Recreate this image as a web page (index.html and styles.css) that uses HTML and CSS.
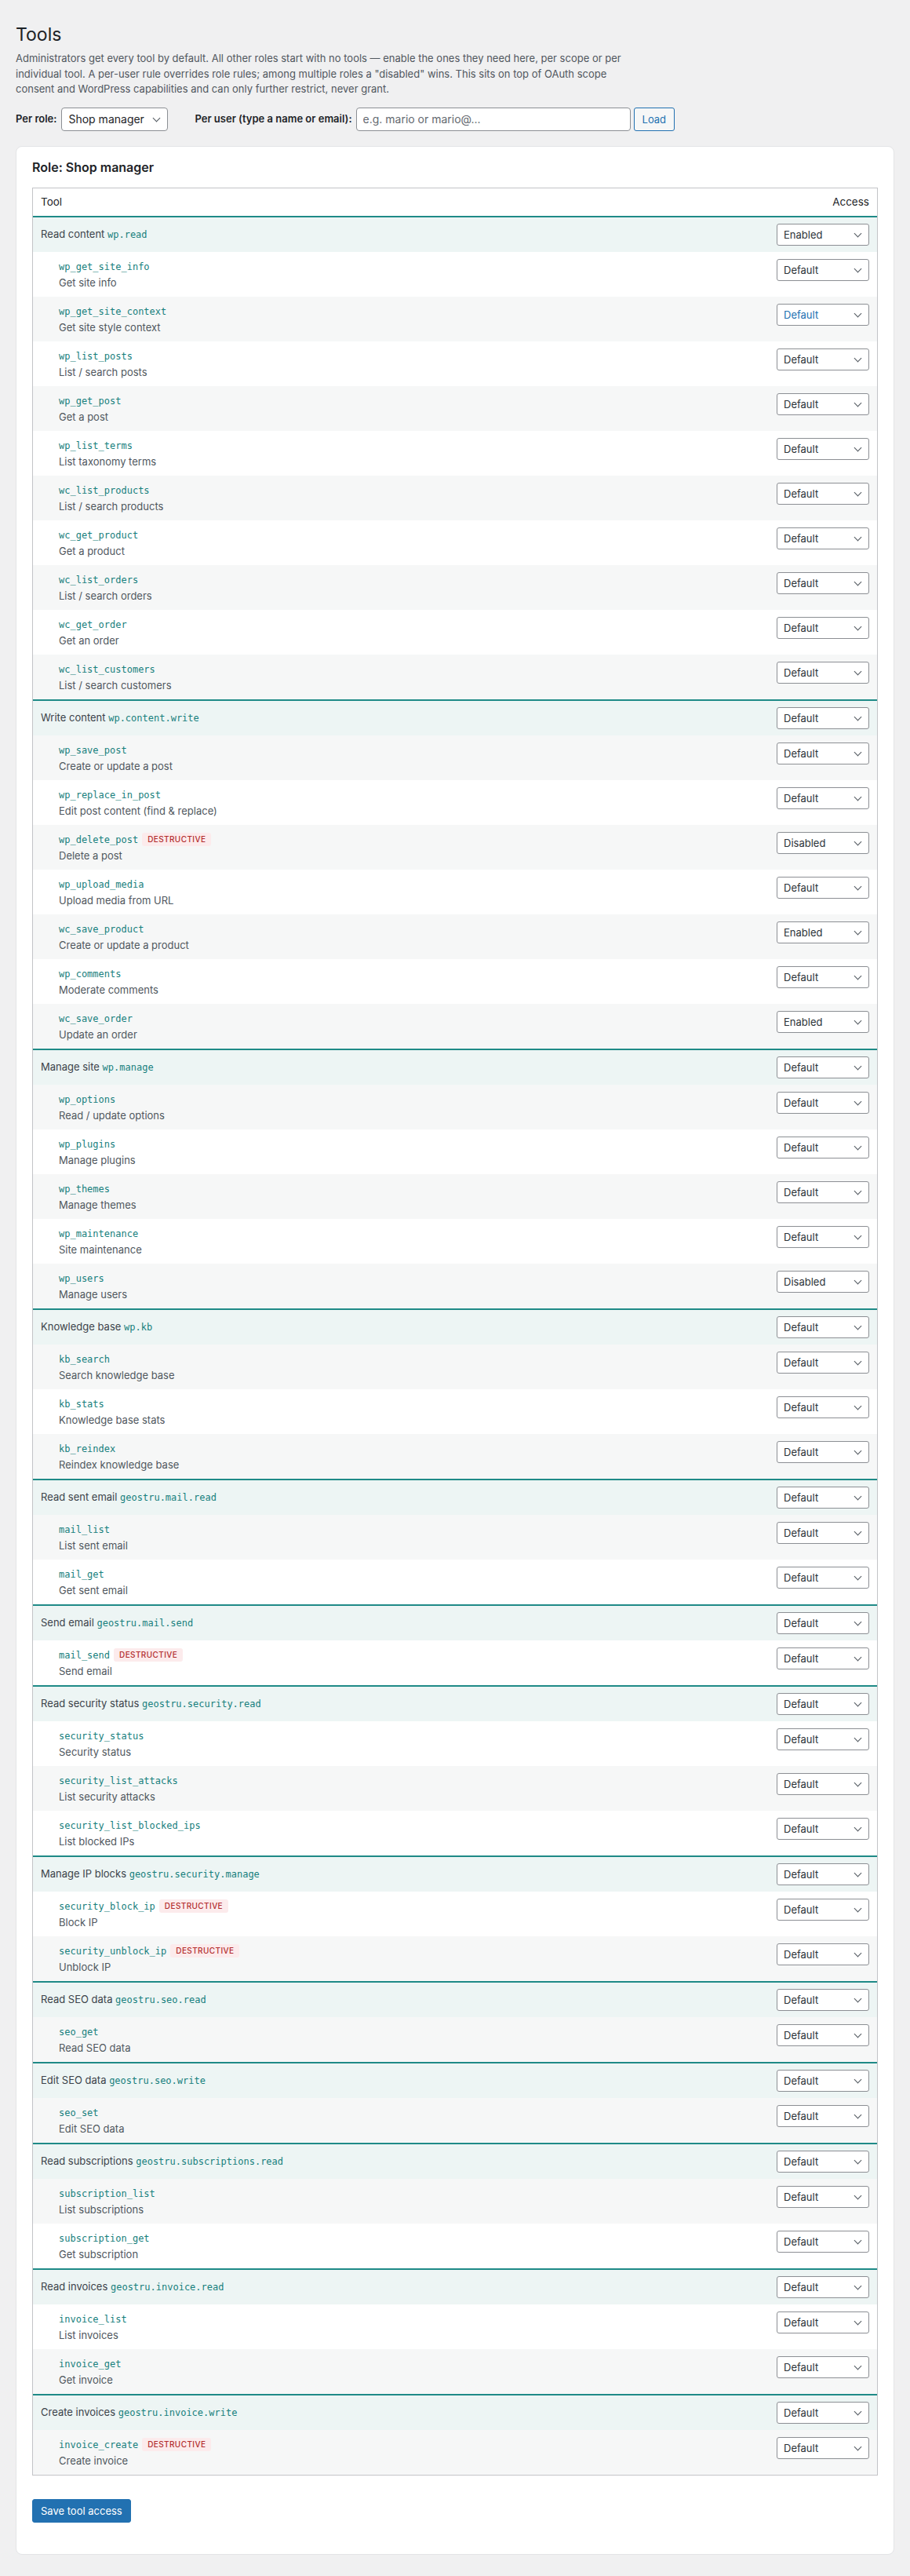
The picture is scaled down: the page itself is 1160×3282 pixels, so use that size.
FILE: index.html
```html
<!DOCTYPE html>
<html lang="en">
<head>
<meta charset="utf-8">
<title>Tools</title>
<link rel="stylesheet" href="styles.css">
</head>
<body>
<div class="wrap">
  <h1 class="page-title">Tools</h1>
  <p class="intro">Administrators get every tool by default. All other roles start with no tools — enable the ones they need here, per scope or per individual tool. A per-user rule overrides role rules; among multiple roles a "disabled" wins. This sits on top of OAuth scope consent and WordPress capabilities and can only further restrict, never grant.</p>

  <div class="controls">
    <label class="ctl-label" for="role">Per role:</label>
    <span class="sel sel-role"><select id="role"><option>Administrator</option><option selected>Shop manager</option><option>Editor</option></select></span>
    <label class="ctl-label ctl-user" for="user">Per user (type a name or email):</label>
    <input id="user" class="user-input" type="text" placeholder="e.g. mario or mario@...">
    <button class="btn-secondary" type="button">Load</button>
  </div>

  <div class="card">
    <h2 class="card-title">Role: Shop manager</h2>
    <table class="tools">
      <thead>
        <tr><th class="col-tool">Tool</th><th class="col-access">Access</th></tr>
      </thead>
      <tbody>
        <tr class="group"><td class="g-label">Read content <code>wp.read</code></td><td class="acc"><span class="sel"><select><option>Default</option><option selected>Enabled</option><option>Disabled</option></select></span></td></tr>
        <tr class="tool"><td class="t-name"><div class="tn"><code>wp_get_site_info</code></div><div class="td">Get site info</div></td><td class="acc"><span class="sel"><select><option selected>Default</option><option>Enabled</option><option>Disabled</option></select></span></td></tr>
        <tr class="tool"><td class="t-name"><div class="tn"><code>wp_get_site_context</code></div><div class="td">Get site style context</div></td><td class="acc"><span class="sel sel-focus"><select><option selected>Default</option><option>Enabled</option><option>Disabled</option></select></span></td></tr>
        <tr class="tool"><td class="t-name"><div class="tn"><code>wp_list_posts</code></div><div class="td">List / search posts</div></td><td class="acc"><span class="sel"><select><option selected>Default</option><option>Enabled</option><option>Disabled</option></select></span></td></tr>
        <tr class="tool"><td class="t-name"><div class="tn"><code>wp_get_post</code></div><div class="td">Get a post</div></td><td class="acc"><span class="sel"><select><option selected>Default</option><option>Enabled</option><option>Disabled</option></select></span></td></tr>
        <tr class="tool"><td class="t-name"><div class="tn"><code>wp_list_terms</code></div><div class="td">List taxonomy terms</div></td><td class="acc"><span class="sel"><select><option selected>Default</option><option>Enabled</option><option>Disabled</option></select></span></td></tr>
        <tr class="tool"><td class="t-name"><div class="tn"><code>wc_list_products</code></div><div class="td">List / search products</div></td><td class="acc"><span class="sel"><select><option selected>Default</option><option>Enabled</option><option>Disabled</option></select></span></td></tr>
        <tr class="tool"><td class="t-name"><div class="tn"><code>wc_get_product</code></div><div class="td">Get a product</div></td><td class="acc"><span class="sel"><select><option selected>Default</option><option>Enabled</option><option>Disabled</option></select></span></td></tr>
        <tr class="tool"><td class="t-name"><div class="tn"><code>wc_list_orders</code></div><div class="td">List / search orders</div></td><td class="acc"><span class="sel"><select><option selected>Default</option><option>Enabled</option><option>Disabled</option></select></span></td></tr>
        <tr class="tool"><td class="t-name"><div class="tn"><code>wc_get_order</code></div><div class="td">Get an order</div></td><td class="acc"><span class="sel"><select><option selected>Default</option><option>Enabled</option><option>Disabled</option></select></span></td></tr>
        <tr class="tool"><td class="t-name"><div class="tn"><code>wc_list_customers</code></div><div class="td">List / search customers</div></td><td class="acc"><span class="sel"><select><option selected>Default</option><option>Enabled</option><option>Disabled</option></select></span></td></tr>

        <tr class="group"><td class="g-label">Write content <code>wp.content.write</code></td><td class="acc"><span class="sel"><select><option selected>Default</option><option>Enabled</option><option>Disabled</option></select></span></td></tr>
        <tr class="tool"><td class="t-name"><div class="tn"><code>wp_save_post</code></div><div class="td">Create or update a post</div></td><td class="acc"><span class="sel"><select><option selected>Default</option><option>Enabled</option><option>Disabled</option></select></span></td></tr>
        <tr class="tool"><td class="t-name"><div class="tn"><code>wp_replace_in_post</code></div><div class="td">Edit post content (find &amp; replace)</div></td><td class="acc"><span class="sel"><select><option selected>Default</option><option>Enabled</option><option>Disabled</option></select></span></td></tr>
        <tr class="tool"><td class="t-name"><div class="tn"><code>wp_delete_post</code><span class="badge">Destructive</span></div><div class="td">Delete a post</div></td><td class="acc"><span class="sel"><select><option>Default</option><option>Enabled</option><option selected>Disabled</option></select></span></td></tr>
        <tr class="tool"><td class="t-name"><div class="tn"><code>wp_upload_media</code></div><div class="td">Upload media from URL</div></td><td class="acc"><span class="sel"><select><option selected>Default</option><option>Enabled</option><option>Disabled</option></select></span></td></tr>
        <tr class="tool"><td class="t-name"><div class="tn"><code>wc_save_product</code></div><div class="td">Create or update a product</div></td><td class="acc"><span class="sel"><select><option>Default</option><option selected>Enabled</option><option>Disabled</option></select></span></td></tr>
        <tr class="tool"><td class="t-name"><div class="tn"><code>wp_comments</code></div><div class="td">Moderate comments</div></td><td class="acc"><span class="sel"><select><option selected>Default</option><option>Enabled</option><option>Disabled</option></select></span></td></tr>
        <tr class="tool"><td class="t-name"><div class="tn"><code>wc_save_order</code></div><div class="td">Update an order</div></td><td class="acc"><span class="sel"><select><option>Default</option><option selected>Enabled</option><option>Disabled</option></select></span></td></tr>

        <tr class="group"><td class="g-label">Manage site <code>wp.manage</code></td><td class="acc"><span class="sel"><select><option selected>Default</option><option>Enabled</option><option>Disabled</option></select></span></td></tr>
        <tr class="tool"><td class="t-name"><div class="tn"><code>wp_options</code></div><div class="td">Read / update options</div></td><td class="acc"><span class="sel"><select><option selected>Default</option><option>Enabled</option><option>Disabled</option></select></span></td></tr>
        <tr class="tool"><td class="t-name"><div class="tn"><code>wp_plugins</code></div><div class="td">Manage plugins</div></td><td class="acc"><span class="sel"><select><option selected>Default</option><option>Enabled</option><option>Disabled</option></select></span></td></tr>
        <tr class="tool"><td class="t-name"><div class="tn"><code>wp_themes</code></div><div class="td">Manage themes</div></td><td class="acc"><span class="sel"><select><option selected>Default</option><option>Enabled</option><option>Disabled</option></select></span></td></tr>
        <tr class="tool"><td class="t-name"><div class="tn"><code>wp_maintenance</code></div><div class="td">Site maintenance</div></td><td class="acc"><span class="sel"><select><option selected>Default</option><option>Enabled</option><option>Disabled</option></select></span></td></tr>
        <tr class="tool"><td class="t-name"><div class="tn"><code>wp_users</code></div><div class="td">Manage users</div></td><td class="acc"><span class="sel"><select><option>Default</option><option>Enabled</option><option selected>Disabled</option></select></span></td></tr>

        <tr class="group"><td class="g-label">Knowledge base <code>wp.kb</code></td><td class="acc"><span class="sel"><select><option selected>Default</option><option>Enabled</option><option>Disabled</option></select></span></td></tr>
        <tr class="tool"><td class="t-name"><div class="tn"><code>kb_search</code></div><div class="td">Search knowledge base</div></td><td class="acc"><span class="sel"><select><option selected>Default</option><option>Enabled</option><option>Disabled</option></select></span></td></tr>
        <tr class="tool"><td class="t-name"><div class="tn"><code>kb_stats</code></div><div class="td">Knowledge base stats</div></td><td class="acc"><span class="sel"><select><option selected>Default</option><option>Enabled</option><option>Disabled</option></select></span></td></tr>
        <tr class="tool"><td class="t-name"><div class="tn"><code>kb_reindex</code></div><div class="td">Reindex knowledge base</div></td><td class="acc"><span class="sel"><select><option selected>Default</option><option>Enabled</option><option>Disabled</option></select></span></td></tr>

        <tr class="group"><td class="g-label">Read sent email <code>geostru.mail.read</code></td><td class="acc"><span class="sel"><select><option selected>Default</option><option>Enabled</option><option>Disabled</option></select></span></td></tr>
        <tr class="tool"><td class="t-name"><div class="tn"><code>mail_list</code></div><div class="td">List sent email</div></td><td class="acc"><span class="sel"><select><option selected>Default</option><option>Enabled</option><option>Disabled</option></select></span></td></tr>
        <tr class="tool"><td class="t-name"><div class="tn"><code>mail_get</code></div><div class="td">Get sent email</div></td><td class="acc"><span class="sel"><select><option selected>Default</option><option>Enabled</option><option>Disabled</option></select></span></td></tr>

        <tr class="group"><td class="g-label">Send email <code>geostru.mail.send</code></td><td class="acc"><span class="sel"><select><option selected>Default</option><option>Enabled</option><option>Disabled</option></select></span></td></tr>
        <tr class="tool"><td class="t-name"><div class="tn"><code>mail_send</code><span class="badge">Destructive</span></div><div class="td">Send email</div></td><td class="acc"><span class="sel"><select><option selected>Default</option><option>Enabled</option><option>Disabled</option></select></span></td></tr>

        <tr class="group"><td class="g-label">Read security status <code>geostru.security.read</code></td><td class="acc"><span class="sel"><select><option selected>Default</option><option>Enabled</option><option>Disabled</option></select></span></td></tr>
        <tr class="tool"><td class="t-name"><div class="tn"><code>security_status</code></div><div class="td">Security status</div></td><td class="acc"><span class="sel"><select><option selected>Default</option><option>Enabled</option><option>Disabled</option></select></span></td></tr>
        <tr class="tool"><td class="t-name"><div class="tn"><code>security_list_attacks</code></div><div class="td">List security attacks</div></td><td class="acc"><span class="sel"><select><option selected>Default</option><option>Enabled</option><option>Disabled</option></select></span></td></tr>
        <tr class="tool"><td class="t-name"><div class="tn"><code>security_list_blocked_ips</code></div><div class="td">List blocked IPs</div></td><td class="acc"><span class="sel"><select><option selected>Default</option><option>Enabled</option><option>Disabled</option></select></span></td></tr>

        <tr class="group"><td class="g-label">Manage IP blocks <code>geostru.security.manage</code></td><td class="acc"><span class="sel"><select><option selected>Default</option><option>Enabled</option><option>Disabled</option></select></span></td></tr>
        <tr class="tool"><td class="t-name"><div class="tn"><code>security_block_ip</code><span class="badge">Destructive</span></div><div class="td">Block IP</div></td><td class="acc"><span class="sel"><select><option selected>Default</option><option>Enabled</option><option>Disabled</option></select></span></td></tr>
        <tr class="tool"><td class="t-name"><div class="tn"><code>security_unblock_ip</code><span class="badge">Destructive</span></div><div class="td">Unblock IP</div></td><td class="acc"><span class="sel"><select><option selected>Default</option><option>Enabled</option><option>Disabled</option></select></span></td></tr>

        <tr class="group"><td class="g-label">Read SEO data <code>geostru.seo.read</code></td><td class="acc"><span class="sel"><select><option selected>Default</option><option>Enabled</option><option>Disabled</option></select></span></td></tr>
        <tr class="tool"><td class="t-name"><div class="tn"><code>seo_get</code></div><div class="td">Read SEO data</div></td><td class="acc"><span class="sel"><select><option selected>Default</option><option>Enabled</option><option>Disabled</option></select></span></td></tr>

        <tr class="group"><td class="g-label">Edit SEO data <code>geostru.seo.write</code></td><td class="acc"><span class="sel"><select><option selected>Default</option><option>Enabled</option><option>Disabled</option></select></span></td></tr>
        <tr class="tool"><td class="t-name"><div class="tn"><code>seo_set</code></div><div class="td">Edit SEO data</div></td><td class="acc"><span class="sel"><select><option selected>Default</option><option>Enabled</option><option>Disabled</option></select></span></td></tr>

        <tr class="group"><td class="g-label">Read subscriptions <code>geostru.subscriptions.read</code></td><td class="acc"><span class="sel"><select><option selected>Default</option><option>Enabled</option><option>Disabled</option></select></span></td></tr>
        <tr class="tool"><td class="t-name"><div class="tn"><code>subscription_list</code></div><div class="td">List subscriptions</div></td><td class="acc"><span class="sel"><select><option selected>Default</option><option>Enabled</option><option>Disabled</option></select></span></td></tr>
        <tr class="tool"><td class="t-name"><div class="tn"><code>subscription_get</code></div><div class="td">Get subscription</div></td><td class="acc"><span class="sel"><select><option selected>Default</option><option>Enabled</option><option>Disabled</option></select></span></td></tr>

        <tr class="group"><td class="g-label">Read invoices <code>geostru.invoice.read</code></td><td class="acc"><span class="sel"><select><option selected>Default</option><option>Enabled</option><option>Disabled</option></select></span></td></tr>
        <tr class="tool"><td class="t-name"><div class="tn"><code>invoice_list</code></div><div class="td">List invoices</div></td><td class="acc"><span class="sel"><select><option selected>Default</option><option>Enabled</option><option>Disabled</option></select></span></td></tr>
        <tr class="tool"><td class="t-name"><div class="tn"><code>invoice_get</code></div><div class="td">Get invoice</div></td><td class="acc"><span class="sel"><select><option selected>Default</option><option>Enabled</option><option>Disabled</option></select></span></td></tr>

        <tr class="group"><td class="g-label">Create invoices <code>geostru.invoice.write</code></td><td class="acc"><span class="sel"><select><option selected>Default</option><option>Enabled</option><option>Disabled</option></select></span></td></tr>
        <tr class="tool"><td class="t-name"><div class="tn"><code>invoice_create</code><span class="badge">Destructive</span></div><div class="td">Create invoice</div></td><td class="acc"><span class="sel"><select><option selected>Default</option><option>Enabled</option><option>Disabled</option></select></span></td></tr>
      </tbody>
    </table>
    <div class="actions">
      <button class="btn-primary" type="button">Save tool access</button>
    </div>
  </div>
</div>
</body>
</html>
```
FILE: styles.css
```css
html, body {
  margin: 0;
  padding: 0;
  background: #f0f0f1;
}
body {
  font-family: Inter, "Noto Sans", "Liberation Sans", sans-serif;
  font-size: 13px;
  line-height: 1.4;
  color: #3c434a;
}
.wrap {
  padding: 20px 20px 29px 20px;
}
.page-title {
  margin: 0;
  padding: 9px 0 4px;
  font-size: 23px;
  font-weight: 400;
  line-height: 30px;
  color: #1d2327;
}
.intro {
  margin: 2px 0 0;
  max-width: 790px;
  line-height: 19.5px;
  color: #50575e;
}
.controls {
  display: flex;
  align-items: center;
  margin-top: 13px;
  height: 30px;
}
.ctl-label {
  font-weight: 600;
  color: #1d2327;
  margin-right: 6px;
}
.ctl-user {
  margin-left: 34px;
  margin-right: 5px;
}
.sel {
  position: relative;
  display: block;
}
.sel::after {
  content: "";
  position: absolute;
  right: 11px;
  top: 50%;
  width: 6px;
  height: 6px;
  border-right: 1.6px solid #50575e;
  border-bottom: 1.6px solid #50575e;
  transform: translateY(-72%) rotate(45deg);
  pointer-events: none;
}
.sel select {
  -webkit-appearance: none;
  appearance: none;
  display: block;
  box-sizing: border-box;
  width: 118px;
  height: 28px;
  margin: 0;
  padding: 0 26px 0 8px;
  border: 1px solid #8c8f94;
  border-radius: 3px;
  background: #fff;
  font-family: Inter, "Noto Sans", "Liberation Sans", sans-serif;
  font-size: 13px;
  color: #2c3338;
  line-height: 26px;
}
.sel-role select {
  width: 136px;
  height: 30px;
  padding-left: 8px;
  border-radius: 4px;
  font-size: 14px;
  line-height: 28px;
  color: #1d2327;
}
.sel-focus select {
  color: #2271b1;
}
.user-input {
  box-sizing: border-box;
  width: 350px;
  height: 30px;
  margin: 0;
  padding: 0 8px;
  border: 1px solid #8c8f94;
  border-radius: 4px;
  background: #fff;
  font-family: Inter, "Noto Sans", "Liberation Sans", sans-serif;
  font-size: 14px;
  color: #2c3338;
}
.user-input::placeholder {
  color: #646970;
}
.btn-secondary {
  box-sizing: border-box;
  margin-left: 4px;
  height: 30px;
  padding: 0 10px;
  border: 1px solid #2271b1;
  border-radius: 3px;
  background: #f6f7f7;
  color: #2271b1;
  font-family: Inter, "Noto Sans", "Liberation Sans", sans-serif;
  font-size: 13px;
}
.card {
  margin-top: 19px;
  background: #fff;
  border: 1px solid #e3e4e6;
  border-radius: 8px;
  padding: 16px 20px 16px;
}
.card-title {
  margin: 0 0 16px;
  font-size: 16px;
  line-height: 20px;
  font-weight: 600;
  color: #1d2327;
}
.tools {
  width: 100%;
  border: 1px solid #c3c4c7;
  border-spacing: 0;
  background: #fff;
}
.tools th {
  padding: 8px 10px;
  line-height: 19px;
  font-weight: 400;
  font-size: 13.5px;
  color: #1d2327;
  text-align: left;
}
.tools th.col-access {
  text-align: right;
}
.tools td {
  padding: 0;
}
.tools tbody tr:nth-child(odd) {
  background: #f6f7f7;
}
.tools tbody tr.group {
  background: #edf5f4;
}
.tools tr.group td {
  border-top: 2px solid #1f8a87;
  padding: 8px 10px 8px;
  vertical-align: middle;
}
.g-label {
  color: #3c434a;
  line-height: 20px;
}
.tools tr.tool td {
  padding: 9px 10px 8px;
  vertical-align: top;
}
.tools tr.tool td.t-name {
  padding-left: 33px;
}
.tools td.acc {
  width: 118px;
}
code {
  font-family: "DejaVu Sans Mono", "Liberation Mono", monospace;
  font-size: 12px;
  color: #17807d;
  background: none;
  padding: 0;
}
.tn {
  height: 20px;
  line-height: 20px;
  display: flex;
  align-items: center;
}
.td {
  line-height: 20px;
  color: #50575e;
}
.badge {
  display: inline-block;
  margin-left: 5px;
  height: 17px;
  line-height: 17px;
  padding: 0 6.5px 0 7px;
  border-radius: 3px;
  background: #fcebec;
  color: #b32d2e;
  font-size: 10px;
  font-weight: 500;
  letter-spacing: 0.4px;
  text-transform: uppercase;
}
.actions {
  margin: 30px 0 24px;
}
.btn-primary {
  box-sizing: border-box;
  height: 30px;
  padding: 0 10px;
  border: 1px solid #2271b1;
  border-radius: 3px;
  background: #2271b1;
  color: #fff;
  font-family: Inter, "Noto Sans", "Liberation Sans", sans-serif;
  font-size: 13px;
}
```
